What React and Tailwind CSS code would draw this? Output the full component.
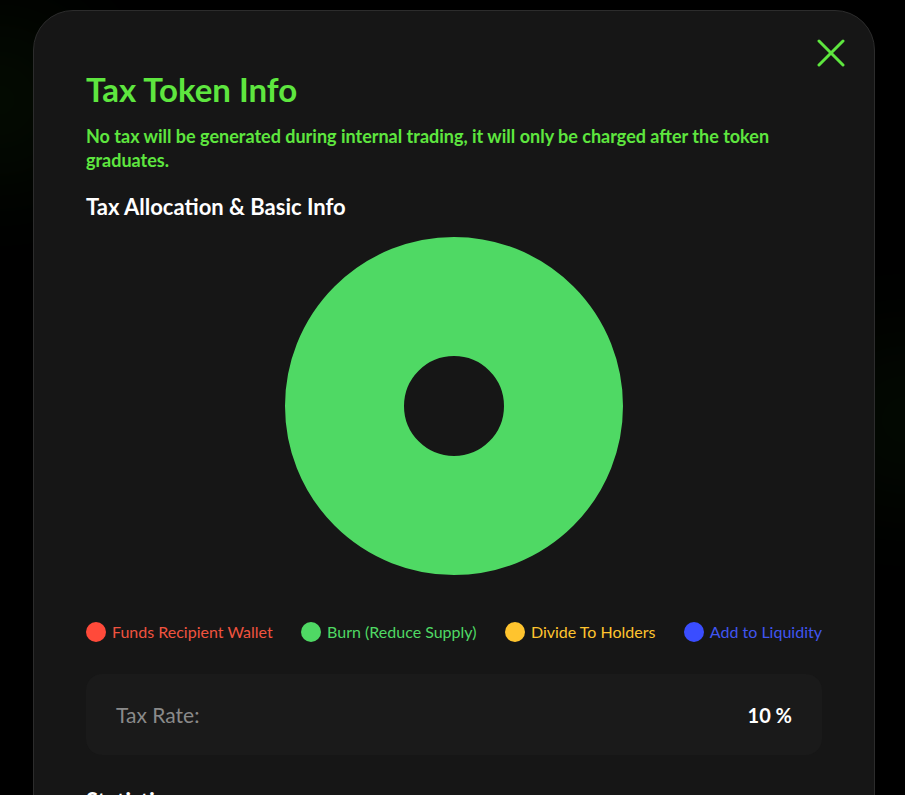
const legend = [
  { label: "Funds Recipient Wallet", dot: "bg-[#ff4a3a]", text: "text-[#f0533f]" },
  { label: "Burn (Reduce Supply)", dot: "bg-[#4fd964]", text: "text-[#4fd964]" },
  { label: "Divide To Holders", dot: "bg-[#ffc42e]", text: "text-[#ffc42e]" },
  { label: "Add to Liquidity", dot: "bg-[#3a4dff]", text: "text-[#4055f0]" },
];

const Donut = () => (
  <svg width="338" height="338" viewBox="0 0 338 338">
    <circle cx="169" cy="169" r="109.5" fill="none" stroke="#4fd964" strokeWidth="119" />
  </svg>
);

const CloseIcon = () => (
  <svg width="28" height="28" viewBox="0 0 28 28" fill="none" stroke="#5ee63f" strokeWidth="3" strokeLinecap="round">
    <path d="M2 2 L26 26" />
    <path d="M26 2 L2 26" />
  </svg>
);

const App = () => {
  return (
    <main className="relative min-h-screen w-full overflow-hidden bg-black pt-[10px] font-['Lato',sans-serif]">
      {/* faint glows behind the modal */}
      <div className="absolute left-[-60px] top-[40px] h-[120px] w-[120px] rounded-full bg-[#1f5a10] opacity-30 blur-3xl" />
      <div className="absolute right-[-60px] top-[360px] h-[120px] w-[120px] rounded-full bg-[#1f5a10] opacity-25 blur-3xl" />

      <div className="relative ml-[33px] w-[842px] rounded-[40px] border border-[#2c2c2c] bg-[#161616] px-[52px] pt-[60px] pb-10">
        <button className="absolute right-[29px] top-[28px]">
          <CloseIcon />
        </button>

        <h1 className="text-[33px] font-bold leading-[36px] text-[#5ee63f]">Tax Token Info</h1>
        <p className="mt-[17px] text-[18px] font-bold leading-[24px] text-[#5ee63f]">
          No tax will be generated during internal trading, it will only be charged after the token graduates.
        </p>

        <h2 className="mt-[21px] text-[22px] font-bold leading-[28px] text-white">Tax Allocation &amp; Basic Info</h2>

        <div className="mt-[16px] flex justify-center">
          <Donut />
        </div>

        {/* Legend */}
        <div className="mt-[45px] flex items-center justify-between">
          {legend.map((item) => (
            <div key={item.label} className="flex items-center gap-[6px]">
              <span className={`h-[20px] w-[20px] rounded-full ${item.dot}`} />
              <span className={`text-[16px] leading-[24px] ${item.text}`}>{item.label}</span>
            </div>
          ))}
        </div>

        {/* Tax rate */}
        <div className="mt-[30px] flex h-[81px] items-center justify-between rounded-2xl bg-[#1a1a1a] px-[30px]">
          <span className="text-[21px] text-[#8a8a8a]">Tax Rate:</span>
          <span className="text-[20px] font-bold text-white">10 %</span>
        </div>

        <h2 className="mt-[32px] text-[22px] font-bold leading-[28px] text-white">Statistics</h2>
        <div className="h-[200px]" />
      </div>
    </main>
  );
};

export default App;
